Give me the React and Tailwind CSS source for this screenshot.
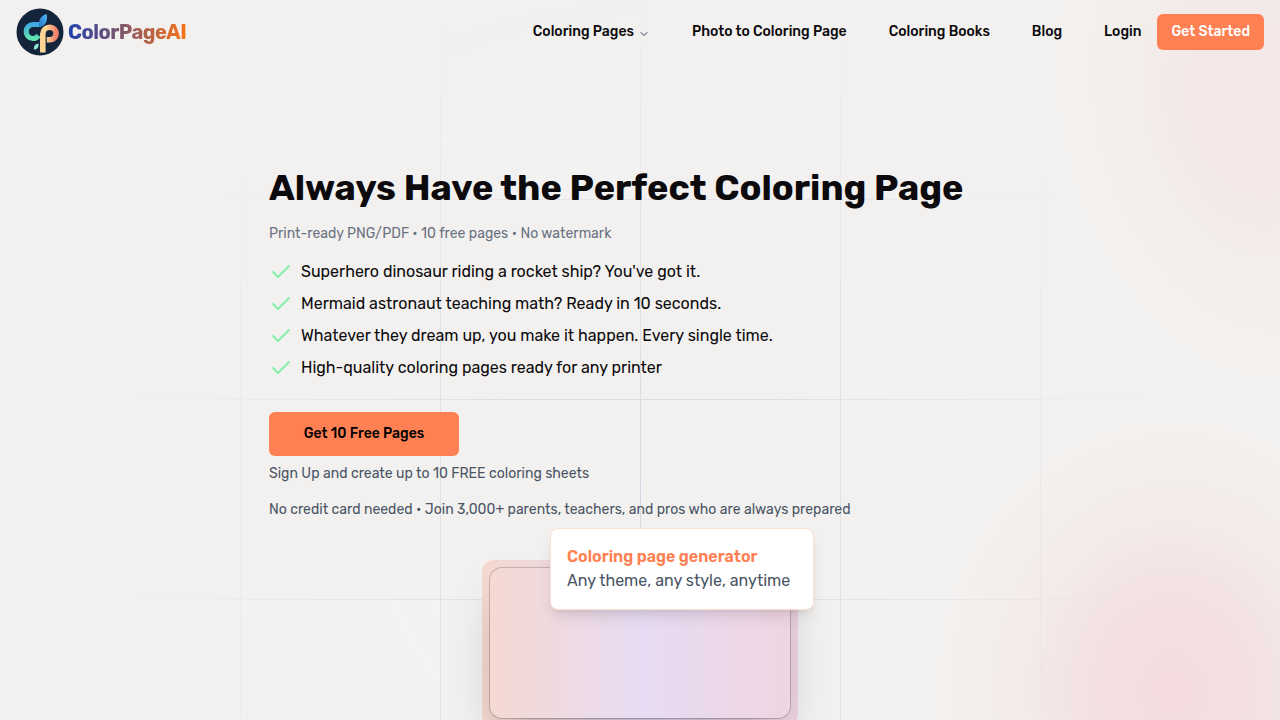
import { Check, ChevronDown } from 'lucide-react'

const navLinks = ['Photo to Coloring Page', 'Coloring Books', 'Blog', 'Login']

const benefits = [
  "Superhero dinosaur riding a rocket ship? You've got it.",
  'Mermaid astronaut teaching math? Ready in 10 seconds.',
  'Whatever they dream up, you make it happen. Every single time.',
  'High-quality coloring pages ready for any printer',
]

function Logo() {
  return (
    <svg viewBox="0 0 48 48" className="size-12" aria-hidden="true">
      <defs>
        <linearGradient id="logoC" x1="0" y1="0" x2="0" y2="1">
          <stop offset="0" stopColor="#3fa9e0" />
          <stop offset="1" stopColor="#5fe3ae" />
        </linearGradient>
        <linearGradient id="logoP" x1="0" y1="0.3" x2="1" y2="0.3">
          <stop offset="0.3" stopColor="#fcd493" />
          <stop offset="1" stopColor="#f2806c" />
        </linearGradient>
        <linearGradient id="logoLeaf" x1="0" y1="1" x2="1" y2="0">
          <stop offset="0" stopColor="#2a72cc" />
          <stop offset="1" stopColor="#4db8f5" />
        </linearGradient>
      </defs>
      <circle cx="24" cy="24" r="23.5" fill="#14243a" />
      <path d="M23.500 16.500h-6.500a6.800 7 0 0 0 0 14c2.500 0 4-.8 5.500-3" fill="none" stroke="url(#logoC)" strokeWidth="5.200" />
      <path d="M23.500 19.500c-1.500-6.500.5-11.500 7-13.500 1.500 6.500-.5 11.500-7 13.500Z" fill="url(#logoLeaf)" />
      <path d="M26.800 44.500V26a7 7 0 0 1 7-6.800 6.300 6.300 0 0 1 0 12.600h-3" fill="none" stroke="url(#logoP)" strokeWidth="5.600" />
      <path d="M18 41.500c-.5-4 1.500-5.500 4.500-6 .5 3.500-1 6-4.500 6Z" fill="#8fe6d2" />
    </svg>
  )
}

function Background() {
  return (
    <div className="pointer-events-none absolute inset-0 -z-10 overflow-hidden" aria-hidden="true">
      <div className="absolute -top-44 -right-40 h-[560px] w-[380px] -rotate-12 rounded-full bg-[radial-gradient(closest-side,#f3e8e6_30%,#f3efed_65%,transparent)]" />
      <div className="absolute top-[420px] -right-32 h-[540px] w-[470px] rounded-full bg-[radial-gradient(closest-side,#f5dcdf,#f4e0e1_30%,#f3ebea_65%,transparent)]" />
      <svg className="absolute inset-0 size-full [mask-image:radial-gradient(520px_at_50%_500px,white,transparent)]">
        <defs>
          <pattern id="grid" width="200" height="200" x="50%" y="-1" patternUnits="userSpaceOnUse">
            <path d="M.5 200V.5H200" fill="none" stroke="#d3d6e0" />
          </pattern>
        </defs>
        <svg x="50%" y="-1" className="overflow-visible">
          <path d="M-200 0h200v200h-200ZM-400 600h200v200h-200Z" fill="#f1f4f6" />
        </svg>
        <rect width="100%" height="100%" fill="url(#grid)" />
      </svg>
    </div>
  )
}

function Header() {
  return (
    <header className="flex h-16 items-center justify-between px-4">
      <a href="#" className="flex items-center gap-1">
        <Logo />
        <span className="bg-linear-to-r/srgb from-[#1e40af] to-[#f97316] bg-clip-text text-xl font-bold tracking-tight text-transparent">
          ColorPageAI
        </span>
      </a>
      <div className="flex items-center gap-4 text-sm font-medium">
        <nav className="flex items-center gap-[42px]">
          <button type="button" className="flex items-center gap-1 py-2">
            Coloring Pages
            <ChevronDown className="mt-1 size-3 text-gray-700" />
          </button>
          {navLinks.map((link) => (
            <a key={link} href="#" className="py-2">{link}</a>
          ))}
        </nav>
        <a href="#" className="rounded-md bg-[#ff8052] px-3.5 py-2 text-white">Get Started</a>
      </div>
    </header>
  )
}

function Preview() {
  return (
    <div className="relative mx-auto mt-10 w-fit rounded-xl bg-linear-to-r/srgb from-[#f6d9d0] via-[#e8dbf3] to-[#f0d5e2] p-2">
      <canvas className="block rounded-xl shadow-2xl ring-1 ring-gray-900/20" />
      <div className="absolute -top-8 left-[68px] min-w-[264px] rounded-lg border border-[#ffe0d5] bg-white p-4 whitespace-nowrap shadow-lg">
        <p className="font-semibold text-[#ff8052]">Coloring page generator</p>
        <p className="text-gray-600">Any theme, any style, anytime</p>
      </div>
    </div>
  )
}

export default function App() {
  return (
    <div className="relative isolate min-h-screen overflow-hidden bg-[#f3f1ef] font-[Rubik,Inter,sans-serif] text-[#0c0a0d]">
      <Background />
      <Header />
      <main className="px-6 pt-24 pb-8">
        <section className="mx-auto max-w-[742px]">
          <h1 className="text-4xl leading-[56px] font-bold">Always Have the Perfect Coloring Page</h1>
          <p className="mt-2 text-sm text-gray-500">Print-ready PNG/PDF • 10 free pages • No watermark</p>
          <ul className="mt-4 space-y-2">
            {benefits.map((text) => (
              <li key={text} className="flex items-center gap-2">
                <Check className="size-6 text-[#86efac]" />
                {text}
              </li>
            ))}
          </ul>
          <button type="button" className="mt-8 block h-11 min-w-[190px] rounded-md bg-[#ff8052] px-8 text-sm font-medium text-black">
            Get 10 Free Pages
          </button>
          <p className="mt-2 text-sm text-gray-600">Sign Up and create up to 10 FREE coloring sheets</p>
          <p className="mt-4 text-sm text-gray-600">
            No credit card needed • Join 3,000+ parents, teachers, and pros who are always prepared
          </p>
        </section>
        <Preview />
      </main>
    </div>
  )
}
